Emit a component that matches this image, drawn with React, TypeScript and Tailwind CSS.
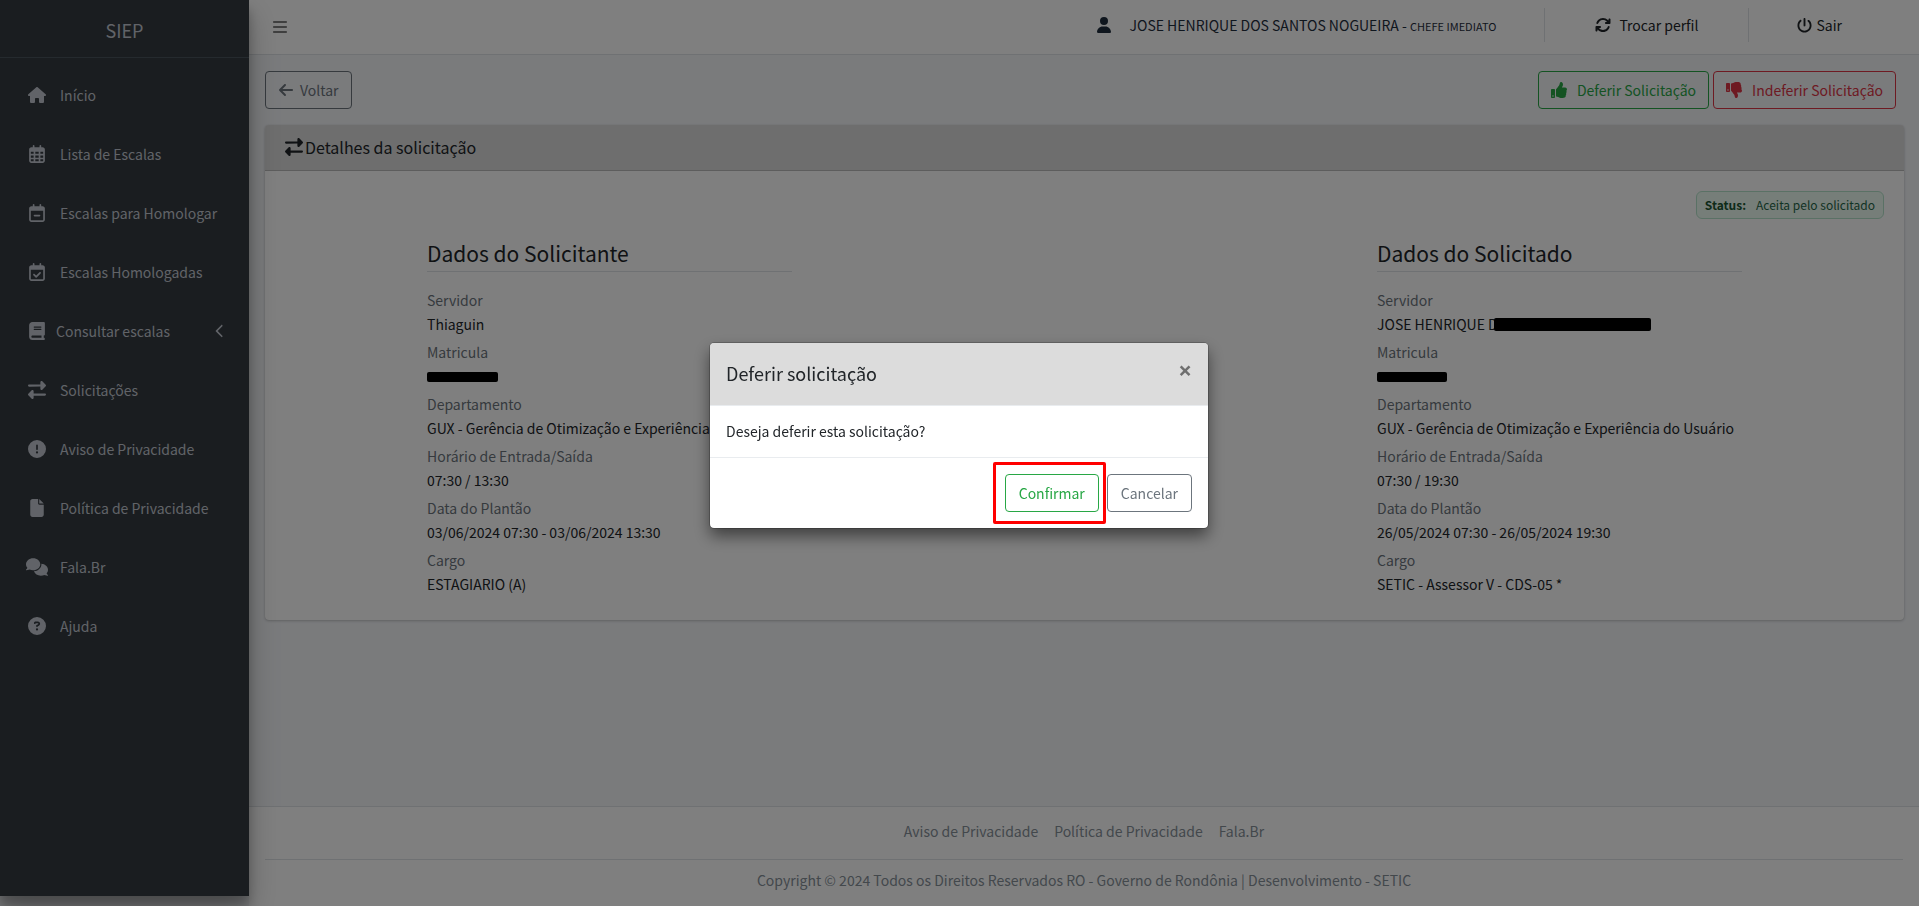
import { useState } from 'react';
import type { ReactNode } from 'react';
import { FaThumbsDown, FaThumbsUp } from 'react-icons/fa';
import {
  FaArrowLeft,
  FaArrowsRotate,
  FaBars,
  FaBook,
  FaChevronLeft,
  FaCircleExclamation,
  FaCircleQuestion,
  FaComments,
  FaFile,
  FaHouse,
  FaPowerOff,
  FaRegCalendarCheck,
  FaRegCalendarDays,
  FaRegCalendarMinus,
  FaRightLeft,
  FaUser,
} from 'react-icons/fa6';

const menu = [
  { label: 'Início', icon: <FaHouse size={18} /> },
  { label: 'Lista de Escalas', icon: <FaRegCalendarDays size={18} /> },
  { label: 'Escalas para Homologar', icon: <FaRegCalendarMinus size={18} /> },
  { label: 'Escalas Homologadas', icon: <FaRegCalendarCheck size={18} /> },
  { label: 'Consultar escalas', icon: <FaBook size={18} />, tree: true },
  { label: 'Solicitações', icon: <FaRightLeft size={18} /> },
  { label: 'Aviso de Privacidade', icon: <FaCircleExclamation size={18} /> },
  { label: 'Política de Privacidade', icon: <FaFile size={18} /> },
  { label: 'Fala.Br', icon: <FaComments size={22} /> },
  { label: 'Ajuda', icon: <FaCircleQuestion size={18} /> },
];

// tarja preta sobre os dados sensíveis
const Tarja = ({ className }: { className: string }) => (
  <span className={`inline-block rounded-xs bg-black ${className}`} />
);

const Campo = ({ label, children }: { label: string; children: ReactNode }) => (
  <div className="mb-1">
    <dt className="text-[#6c757d]">{label}</dt>
    <dd className="flex h-6 items-center whitespace-nowrap">{children}</dd>
  </div>
);

const Sidebar = () => (
  <aside className="h-[calc(100vh-10px)] w-[249px] shrink-0 bg-[#343a40] text-[#c2c7d0] shadow-[0_14px_28px_rgba(0,0,0,0.25),0_10px_10px_rgba(0,0,0,0.22)]">
    <a href="#" className="flex h-[58px] items-center justify-center border-b border-[#4b545c] pt-0.5 text-lg">
      SIEP
    </a>
    <nav className="flex flex-col gap-[19px] px-2 pt-[17px]">
      {menu.map((item) => (
        <a key={item.label} href="#" className="flex h-10 items-center">
          <span className="flex w-[57px] justify-center">{item.icon}</span>
          <span className={item.tree ? '-ml-[9px] flex-1' : '-ml-[5px] flex-1'}>{item.label}</span>
          {item.tree && <FaChevronLeft size={14} className="mr-3.5" />}
        </a>
      ))}
    </nav>
  </aside>
);

const Navbar = () => (
  <header className="flex h-[55px] items-center justify-between border-b border-[#dee2e6] bg-white pl-[23px]">
    <button aria-label="Menu" className="text-[#7f7f7f]">
      <FaBars size={16} />
    </button>
    <div className="flex items-center pb-1">
      <a href="#" className="flex items-center gap-[18px] pr-12 text-[#1f2d3d]">
        <FaUser size={16} />
        <span>
          JOSE HENRIQUE DOS SANTOS NOGUEIRA - <small className="text-[11px]">CHEFE IMEDIATO</small>
        </span>
      </a>
      <a href="#" className="flex h-[34px] items-center gap-2 border-l border-[#dee2e6] px-[50px]">
        <FaArrowsRotate size={16} />
        Trocar perfil
      </a>
      <a href="#" className="flex h-[34px] items-center gap-1 border-l border-[#dee2e6] pr-[77px] pl-12">
        <FaPowerOff size={15} />
        Sair
      </a>
    </div>
  </header>
);

const Modal = ({ onClose }: { onClose: () => void }) => (
  <div className="fixed inset-0 z-50 bg-black/50 pr-px">
    <div
      role="dialog"
      aria-labelledby="modal-title"
      className="mx-auto mt-[343px] w-[498px] overflow-hidden rounded-sm bg-white text-[#212529] shadow-[0_8px_16px_rgba(0,0,0,0.5)] outline outline-black/20"
    >
      <div className="flex h-[63px] items-start justify-between border-b border-[#e9ecef] bg-[#dcdcdc] px-4 pt-[15px]">
        <h5 id="modal-title" className="text-lg leading-[30px]">
          Deferir solicitação
        </h5>
        <button
          onClick={onClose}
          aria-label="Fechar"
          className="font-['Open_Sans',sans-serif] text-2xl leading-6 font-bold text-black/50"
        >
          ×
        </button>
      </div>
      <p className="px-4 pt-[13px] pb-3.5">Deseja deferir esta solicitação?</p>
      <div className="flex justify-end gap-2 border-t border-[#e9ecef] p-4">
        <div className="relative">
          <button
            onClick={onClose}
            className="h-[38px] rounded-sm border border-[#28a745] px-[13px] text-[#28a745] hover:bg-[#28a745] hover:text-white"
          >
            Confirmar
          </button>
          <span className="pointer-events-none absolute -inset-3 -right-[7px] rounded-xs border-3 border-[#ff0000]" />
        </div>
        <button
          onClick={onClose}
          className="h-[38px] rounded-sm border border-[#6c757d] px-[13px] text-[#6c757d] hover:bg-[#6c757d] hover:text-white"
        >
          Cancelar
        </button>
      </div>
    </div>
  </div>
);

const App = () => {
  const [open, setOpen] = useState(true);

  return (
    <div className="flex h-screen overflow-hidden bg-[#f4f6f9] font-['Source_Sans_Pro','Noto_Sans_CJK_JP',sans-serif] text-sm leading-6 text-[#212529]">
      <div className="z-10 flex">
        <Sidebar />
      </div>

      <div className="flex min-w-0 flex-1 flex-col">
        <Navbar />

        <main className="flex-1 px-4 pt-4 pr-[15px]">
          <div className="flex justify-between pr-2">
            <button className="flex h-[38px] items-center gap-1.5 rounded-sm border border-[#6c757d] px-3 text-[#6c757d]">
              <FaArrowLeft size={16} />
              Voltar
            </button>
            <div className="flex gap-1">
              <button
                onClick={() => setOpen(true)}
                className="flex h-[38px] items-center gap-2.5 rounded-sm border border-[#28a745] px-3 text-[#28a745]"
              >
                <FaThumbsUp size={16} />
                Deferir Solicitação
              </button>
              <button className="flex h-[38px] items-center gap-2.5 rounded-sm border border-[#dc3545] px-3 text-[#dc3545]">
                <FaThumbsDown size={16} />
                Indeferir Solicitação
              </button>
            </div>
          </div>

          <section className="mt-4 rounded-sm bg-white shadow-[0_0_1px_rgba(0,0,0,0.125),0_1px_3px_rgba(0,0,0,0.2)]">
            <h3 className="flex h-[46px] items-center gap-0.5 rounded-t-sm border-b border-black/15 bg-[#dcdcdc] px-5 pb-0.5 text-base">
              <FaRightLeft size={18} />
              Detalhes da solicitação
            </h3>
            <div className="px-5 py-5">
              <div className="flex justify-end">
                <span className="flex h-7 items-center gap-2.5 rounded-md border border-[#b5e3cb] bg-[#edfdf3] px-2 text-xs text-[#276749]">
                  <b className="text-[#1c5632]">Status:</b> Aceita pelo solicitado
                </span>
              </div>
              <div className="flex justify-between px-[142px] pt-4">
                <div className="min-w-[365px]">
                  <h4 className="mb-4 border-b border-[#dee2e6] pt-0.5 pb-0.5 text-[21px] leading-8">
                    Dados do Solicitante
                  </h4>
                  <dl>
                    <Campo label="Servidor">Thiaguin</Campo>
                    <Campo label="Matricula">
                      <Tarja className="mt-0.5 h-[10px] w-[71px]" />
                    </Campo>
                    <Campo label="Departamento">GUX - Gerência de Otimização e Experiência do Usuário</Campo>
                    <Campo label="Horário de Entrada/Saída">07:30 / 13:30</Campo>
                    <Campo label="Data do Plantão">03/06/2024 07:30 - 03/06/2024 13:30</Campo>
                    <Campo label="Cargo">ESTAGIARIO (A)</Campo>
                  </dl>
                </div>
                <div className="min-w-[365px]">
                  <h4 className="mb-4 border-b border-[#dee2e6] pt-0.5 pb-0.5 text-[21px] leading-8">
                    Dados do Solicitado
                  </h4>
                  <dl>
                    <Campo label="Servidor">
                      JOSE HENRIQUE D<Tarja className="-ml-1 h-[13px] w-[157px]" />
                    </Campo>
                    <Campo label="Matricula">
                      <Tarja className="mt-0.5 h-[10px] w-[70px]" />
                    </Campo>
                    <Campo label="Departamento">GUX - Gerência de Otimização e Experiência do Usuário</Campo>
                    <Campo label="Horário de Entrada/Saída">07:30 / 19:30</Campo>
                    <Campo label="Data do Plantão">26/05/2024 07:30 - 26/05/2024 19:30</Campo>
                    <Campo label="Cargo">SETIC - Assessor V - CDS-05 *</Campo>
                  </dl>
                </div>
              </div>
            </div>
          </section>
        </main>

        <footer className="border-t border-[#dee2e6] bg-white px-4 pb-[14px] text-center text-[#869099]">
          <div className="flex h-[52px] items-center justify-center gap-4 pb-1">
            <a href="#">Aviso de Privacidade</a>
            <a href="#">Política de Privacidade</a>
            <a href="#">Fala.Br</a>
          </div>
          <p className="border-t border-[#dee2e6] pt-2">
            Copyright © 2024 Todos os Direitos Reservados RO - Governo de Rondônia | Desenvolvimento - SETIC
          </p>
        </footer>
      </div>

      {open && <Modal onClose={() => setOpen(false)} />}
    </div>
  );
};

export default App;
